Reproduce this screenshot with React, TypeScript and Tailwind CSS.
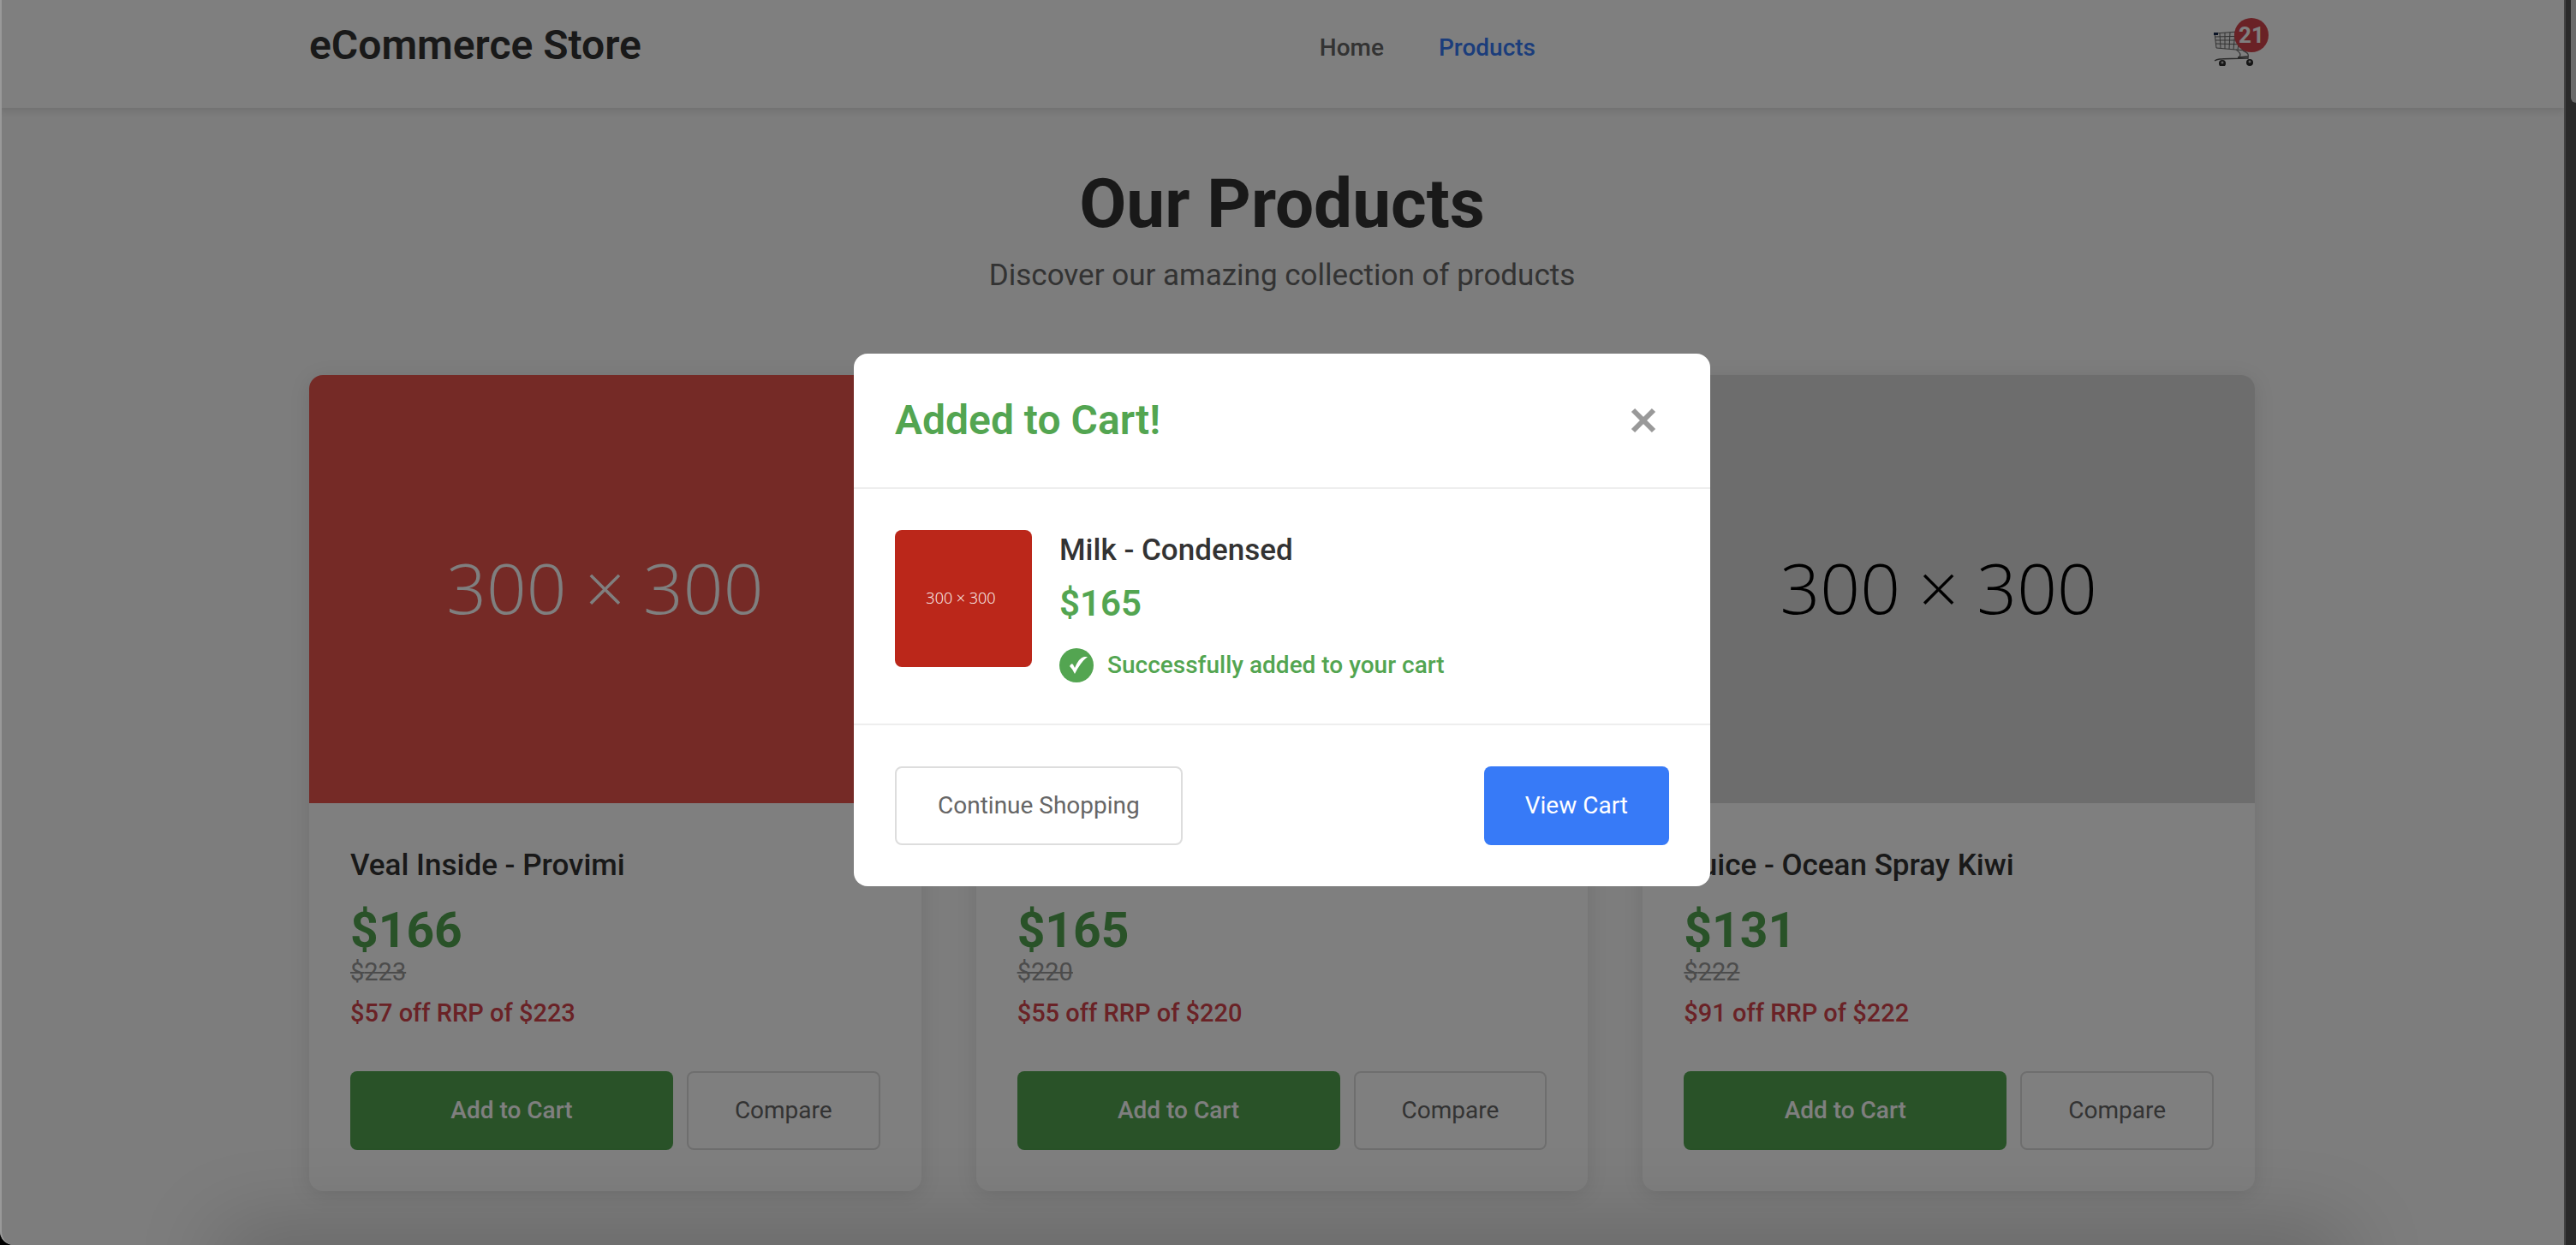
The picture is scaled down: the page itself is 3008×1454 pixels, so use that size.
import { useState } from "react";

type Product = {
  name: string;
  price: number;
  rrp: number;
  tile: string;
};

const products: Product[] = [
  { name: "Veal Inside - Provimi", price: 166, rrp: 223, tile: "bg-[#ea544c] text-white" },
  { name: "Milk - Condensed", price: 165, rrp: 220, tile: "bg-[#bb271a] text-white" },
  { name: "Juice - Ocean Spray Kiwi", price: 131, rrp: 222, tile: "bg-[#dadada] text-black" },
];

function CartIcon() {
  return (
    <svg viewBox="0 0 48 48" className="size-12" fill="none" aria-hidden="true">
      <path d="M1 10 L42 7 L37 30 L3 27 Z" fill="#f2f2f2" />
      <path
        d="M1 10 L42 7 M1 14 L41 13 M2 18 L40 18 M2 22 L39 23 M3 27 L37 30 M7 10 L8 27 M13 9 L13 28 M19 9 L18 28 M25 8 L23 29 M31 8 L28 29 M37 7 L33 30 M1 10 L3 27 M42 7 L37 30"
        stroke="#666"
        strokeWidth="1"
      />
      <rect x="0" y="9" width="5" height="3" fill="#16294d" />
      <path d="M26 29 C32 33 32 36 29 38 M34 30 C41 33 41 35 40 40" stroke="#777" strokeWidth="1.4" />
      <path d="M1 42 C5 39 10 40 40 39 M28 38 L40 37" stroke="#555" strokeWidth="1.4" />
      <circle cx="10" cy="45" r="4" fill="#2a2a2a" />
      <circle cx="10" cy="44" r="1.5" fill="#bbb" />
      <circle cx="42" cy="44" r="4" fill="#2a2a2a" />
      <circle cx="42" cy="43" r="1.5" fill="#bbb" />
    </svg>
  );
}

function Header() {
  return (
    <header className="relative bg-white pt-2 pb-[28px] shadow-[0_4px_8px_rgba(0,0,0,0.1)]">
      <div className="mx-auto flex h-[90px] max-w-[2400px] items-center justify-between px-16">
        <span className="text-5xl font-semibold text-[#333]">eCommerce Store</span>
        <nav className="flex gap-16 pt-1.5 text-[28px] font-medium">
          <a href="#home" className="text-[#666]">Home</a>
          <a href="#products" className="text-[#377af7]">Products</a>
        </nav>
        <a href="#cart" aria-label="Cart, 21 items" className="relative block">
          <CartIcon />
          <span className="absolute -top-2 -right-4 flex size-10 items-center justify-center rounded-full bg-[#d4444c] text-[26px] font-bold text-white">
            21
          </span>
        </a>
      </div>
    </header>
  );
}

function ProductCard({ product }: { product: Product }) {
  return (
    <article className="overflow-hidden rounded-2xl bg-white shadow-[0_4px_24px_rgba(0,0,0,0.1)]">
      <div className={`flex h-[500px] items-center justify-center pr-6 pb-1.5 font-['Open_Sans'] text-[82px] font-light ${product.tile}`}>
        300 × 300
      </div>
      <div className="flex flex-col p-12">
        <h2 className="text-[35px] leading-[50px] font-medium text-[#333]">{product.name}</h2>
        <p className="mt-4 text-[57px] leading-[70px] font-bold text-[#53a551]">${product.price}</p>
        <p className="text-[29px] leading-[27px] text-[#999] line-through">${product.rrp}</p>
        <p className="mt-4 text-[29px] leading-[36px] font-medium text-[#d4444c]">
          ${product.rrp - product.price} off RRP of ${product.rrp}
        </p>
        <div className="mt-[50px] flex gap-4">
          <button className="h-[92px] flex-1 rounded-lg bg-[#53a551] text-[28px] font-medium text-white">Add to Cart</button>
          <button className="h-[92px] rounded-lg border-2 border-[#ddd] px-[54px] text-[28px] text-[#666]">Compare</button>
        </div>
      </div>
    </article>
  );
}

function CartDialog({ onClose }: { onClose: () => void }) {
  return (
    <div className="absolute inset-0 flex items-center justify-center bg-black/50 pt-px">
      <div role="dialog" aria-modal="true" aria-labelledby="dialog-title" className="mb-[7px] w-[1000px] rounded-2xl bg-white">
        <div className="flex h-[158px] items-center justify-between border-b-2 border-[#eee] px-12">
          <h2 id="dialog-title" className="text-5xl font-semibold text-[#53a551]">Added to Cart!</h2>
          <button onClick={onClose} aria-label="Close" className="flex size-[60px] items-center justify-center text-[#999]">
            <svg viewBox="0 0 30 30" className="size-[30px]" aria-hidden="true">
              <path d="M3 3 L27 27 M27 3 L3 27" stroke="currentColor" strokeWidth="6" />
            </svg>
          </button>
        </div>
        <div className="flex items-start gap-8 border-b-2 border-[#eee] p-12">
          <div className="flex size-40 items-center justify-center rounded-lg bg-[#bb271a] pr-1.5 pb-0.5 font-['Open_Sans'] text-[18px] font-light text-white">
            300 × 300
          </div>
          <div>
            <h3 className="text-[35px] leading-[48px] font-medium text-[#333]">Milk - Condensed</h3>
            <p className="mt-2 text-[42px] leading-[60px] font-semibold text-[#53a551]">$165</p>
            <p className="mt-[22px] flex h-10 items-center gap-4 text-[28px] font-medium text-[#53a551]">
              <svg viewBox="0 0 40 40" className="size-10" aria-hidden="true">
                <circle cx="20" cy="20" r="20" fill="currentColor" />
                <path d="M12 21 Q14 17 16 19 L18 23 Q23 11 29 10 L33 10 Q25 16 18 30 Q16 25 12 21 Z" fill="#fff" />
              </svg>
              Successfully added to your cart
            </p>
          </div>
        </div>
        <div className="flex justify-between p-12">
          <button onClick={onClose} className="h-[92px] rounded-lg border-2 border-[#ddd] px-12 text-[28px] text-[#666]">Continue Shopping</button>
          <button className="h-[92px] rounded-lg bg-[#377af7] px-12 text-[28px] text-white">View Cart</button>
        </div>
      </div>
    </div>
  );
}

export default function App() {
  const [open, setOpen] = useState(true);
  return (
    <div className="flex h-screen overflow-hidden bg-black font-['Roboto',sans-serif]">
      <div className="relative min-w-0 flex-1 overflow-hidden rounded-bl-2xl bg-[#fafafa]">
        <Header />
        <main className="mx-auto max-w-[2400px] px-16 pt-16">
          <div className="text-center">
            <h1 className="text-[80px] leading-[96px] font-bold text-[#333]">Our Products</h1>
            <p className="mt-2 text-[35px] leading-[56px] text-[#666]">Discover our amazing collection of products</p>
          </div>
          <div className="mt-[88px] grid grid-cols-3 gap-16">
            {products.map((p) => (
              <ProductCard key={p.name} product={p} />
            ))}
          </div>
        </main>
        {open && <CartDialog onClose={() => setOpen(false)} />}
        <div className="pointer-events-none absolute inset-x-[280px] -bottom-12 h-10 shadow-[0_0_100px_24px_rgba(0,0,0,0.2)]" />
        <div className="pointer-events-none absolute inset-0 rounded-bl-2xl border-l-2 border-[#999]" />
      </div>
      <div className="flex w-[14px] justify-end overflow-hidden border-l-2 border-[#434343] bg-[#2a2a2a]">
        <div className="h-[120px] w-1.5 rounded-bl-md bg-[#6b6b6b]" />
      </div>
    </div>
  );
}
